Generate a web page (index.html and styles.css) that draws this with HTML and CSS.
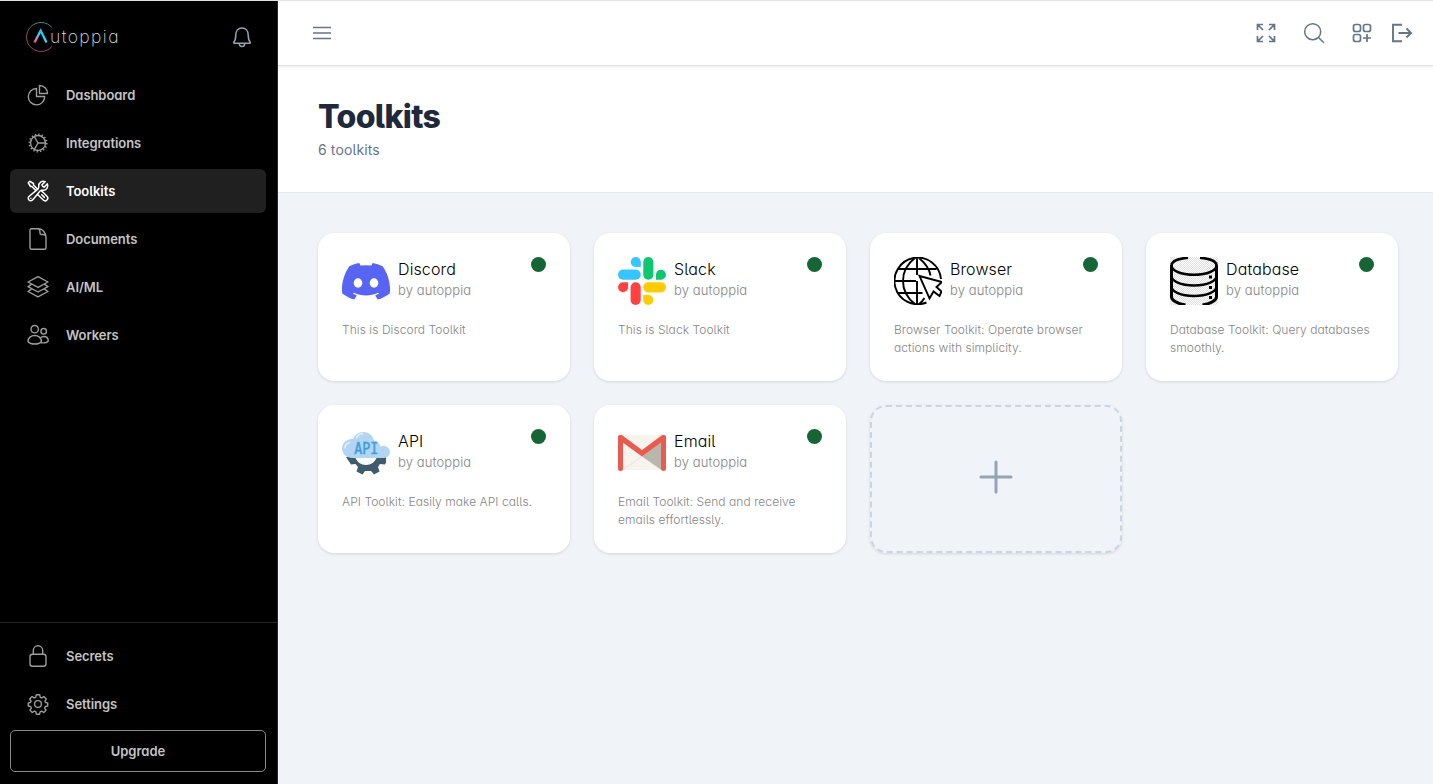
FILE: index.html
```html
<!DOCTYPE html>
<html lang="en">
<head>
<meta charset="utf-8">
<title>Toolkits - Autoppia</title>
<link rel="stylesheet" href="styles.css">
</head>
<body>
<div class="app">
  <aside class="sidebar">
    <div class="brand">
      <div class="logo">
        <svg class="logo-mark" width="30" height="32" viewBox="0 0 30 32" fill="none">
          <defs>
            <linearGradient id="ring" x1="0" y1="0" x2="0" y2="1"><stop offset="0" stop-color="#3b8e93"/><stop offset=".35" stop-color="#8a5040"/><stop offset=".7" stop-color="#a5602f"/><stop offset="1" stop-color="#9b3a7c"/></linearGradient>
            <linearGradient id="peak" x1="8" y1="21" x2="20" y2="8" gradientUnits="userSpaceOnUse"><stop offset="0" stop-color="#ff5470"/><stop offset=".28" stop-color="#c98be0"/><stop offset=".55" stop-color="#20dff0"/><stop offset="1" stop-color="#1b8fe0"/></linearGradient>
          </defs>
          <path d="M26 6.500A14.500 14.500 0 1 0 26 25.500" stroke="url(#ring)"/>
          <path d="M8.500 21.500 14.700 9.500l5.800 12" stroke="url(#peak)" stroke-width="2.300"/>
        </svg>
        <span class="logo-text">utoppia</span>
      </div>
      <svg class="bell" width="24" height="24" viewBox="0 0 24 24"><path d="M3.800 17.200c1.500-1.700 2-3 2-7.200 0-4 2.300-7 6.200-7s6.200 3 6.200 7c0 4.200.5 5.500 2 7.200.4.500.1 1-.5 1H4.300c-.6 0-.9-.5-.5-1zM9.300 18.500a2.700 3 0 0 0 5.400 0"/></svg>
    </div>
    <nav class="nav">
      <a class="nav-item"><svg width="24" height="24" viewBox="0 0 24 24"><path d="M10.500 5.500a8.200 8.200 0 1 0 8.200 8h-8.200zM13.500 2.500v8h8a8 8 0 0 0-8-8z"/></svg><span>Dashboard</span></a>
      <a class="nav-item"><svg width="24" height="24" viewBox="0 0 24 24"><circle cx="12" cy="12" r="7.500"/><circle cx="12" cy="12" r="8.700" stroke-width="1.700" stroke-linecap="butt" stroke-dasharray="1.300 2.117"/><path d="M12 12h7.500M12 12 8.250 5.500M12 12l-3.750 6.500"/></svg><span>Integrations</span></a>
      <a class="nav-item active"><svg width="24" height="24" viewBox="0 0 24 24"><path d="M11.420 15.170 17.250 21A2.652 2.652 0 0 0 21 17.250l-5.877-5.877M11.420 15.170l2.496-3.030c.317-.384.740-.626 1.208-.766M11.420 15.170l-4.655 5.653a2.548 2.548 0 1 1-3.586-3.586l6.837-5.630m5.108-.233c.550-.164 1.163-.188 1.743-.140a4.500 4.500 0 0 0 4.486-6.336l-3.276 3.277a3.004 3.004 0 0 1-2.250-2.250l3.276-3.276a4.500 4.500 0 0 0-6.336 4.486c.091 1.076-.071 2.264-.904 2.950l-.102.085m-1.745 1.437L5.909 7.500H4.500L2.250 3.750l1.500-1.500L7.500 4.500v1.409l4.260 4.260m-1.745 1.437 1.745-1.437m6.615 8.206L15.750 15.750M4.867 19.125h.008v.008h-.008z"/></svg><span>Toolkits</span></a>
      <a class="nav-item"><svg width="24" height="24" viewBox="0 0 24 24"><path d="M13 1.800H5.500A1.500 1.500 0 0 0 4 3.300v17.400a1.500 1.500 0 0 0 1.500 1.500h13a1.500 1.500 0 0 0 1.500-1.500V10.500C20 5.500 16 1.800 13 1.800zM12.300 1.800c1.400.5 1.700 1.700 1.700 3v1.400c0 .8.500 1.300 1.300 1.300h1.400c1.400 0 2.700.5 3.200 1.800"/></svg><span>Documents</span></a>
      <a class="nav-item"><svg width="24" height="24" viewBox="0 0 24 24"><path d="M12 1.700 22 7l-10 5.300L2 7zM5.800 9.200 2 11.700l10 5.300 10-5.300-3.800-2.500M5.800 13.900 2 16.500l10 5.300 10-5.300-3.800-2.600"/></svg><span>AI/ML</span></a>
      <a class="nav-item"><svg width="24" height="24" viewBox="0 0 24 24"><circle cx="8.700" cy="6.200" r="3.700"/><circle cx="17.700" cy="8.300" r="2.800"/><path d="M2 18.500c0-3.600 3-6 6.700-6s6.700 2.400 6.700 6c-1.300 2-4 2.500-6.700 2.500S3.300 20.500 2 18.500zM14.300 15.200c1-1.100 2.200-1.700 3.500-1.700 2.600 0 4.500 1.700 4.500 4.500-1.300 1.700-4 2.200-6.900 1.700"/></svg><span>Workers</span></a>
    </nav>
    <div class="sidebar-footer">
      <a class="nav-item"><svg width="24" height="24" viewBox="0 0 24 24"><rect x="4" y="10.300" width="16" height="12" rx="2.500"/><path d="M7.300 10.300V6.500a4.700 4.700 0 0 1 9.400 0v3.800"/></svg><span>Secrets</span></a>
      <a class="nav-item"><svg width="24" height="24" viewBox="0 0 24 24"><circle cx="12" cy="12" r="3.400"/><path d="M10.300 2.800h3.400l.6 2.500 1.400.6 2.200-1.300 2.400 2.400L19 9.200l.5 1.300 2.200.4v3.100l-2.300.5-.7 1.600 1.300 2.100-2.300 2.300-2.100-1.300-1.500.7-.5 2.300h-3.200l-.5-2.300-1.500-.7-2.100 1.300L4 18.200l1.300-2.100-.7-1.600-2.300-.5v-3.100l2.200-.4.600-1.300L3.700 7l2.400-2.400 2.200 1.300 1.400-.6z"/></svg><span>Settings</span></a>
      <button class="upgrade">Upgrade</button>
    </div>
  </aside>
  <main class="main">
    <header class="topbar">
      <svg class="menu" width="24" height="24" viewBox="0 0 24 24"><path d="M3 6.500h18M3 12h18M3 17.500h18"/></svg>
      <div class="actions">
        <svg width="24" height="24" viewBox="0 0 24 24"><path stroke-width="1.700" d="M9 3.500H3.500V9M3.500 3.500l5.500 5.500M15 3.500h5.500V9M20.500 3.500 15 9M9 20.500H3.500V15M3.500 20.500 9 15M15 20.500h5.500V15M20.500 20.500 15 15"/></svg>
        <svg width="24" height="24" viewBox="0 0 24 24"><circle cx="10.700" cy="10.700" r="8"/><path d="m16.500 16.500 5.300 5.300"/></svg>
        <svg width="24" height="24" viewBox="0 0 24 24"><g stroke-width="1.700"><rect x="3.500" y="3.500" width="7" height="7" rx="2"/><rect x="13.500" y="3.500" width="7" height="7" rx="2"/><rect x="3.500" y="13.500" width="7" height="7" rx="2"/><path d="M17 13v8M13 17h8"/></g></svg>
        <svg class="exit" width="24" height="24" viewBox="0 0 24 24"><path d="M12 3.800H3v16.400h9M8.500 12H21M16.500 7.500 21 12l-4.500 4.500"/></svg>
      </div>
    </header>
    <section class="page-head">
      <h1>Toolkits</h1>
      <p>6 toolkits</p>
    </section>
    <section class="grid">
      <article class="card">
        <div class="card-top">
          <svg width="48" height="48" viewBox="0 0 48 48"><path fill="#5865f2" d="M40.600 9.200A39 39 0 0 0 30.700 6l-1.300 2.600a37 37 0 0 0-10.900 0L17.200 6c-3.500.6-6.800 1.700-9.900 3.200C1.100 18.400-.6 27.500.2 36.400c4.200 3.100 8.200 5 12.100 6.200l2.500-4.200-3.900-1.900 1-.8c7.700 3.600 16.400 3.600 24.200 0l1 .8-3.900 1.900 2.500 4.200c3.900-1.200 7.900-3.100 12.100-6.200 1-10.300-1.700-19.300-7.200-27.200z"/><ellipse cx="16" cy="26" rx="4.300" ry="4.700" fill="#fff"/><ellipse cx="32" cy="26" rx="4.300" ry="4.700" fill="#fff"/></svg>
          <div class="card-title"><h2>Discord</h2><p>by autoppia</p></div><i class="status"></i>
        </div>
        <p class="desc">This is Discord Toolkit</p>
      </article>
      <article class="card">
        <div class="card-top">
          <svg width="48" height="48" viewBox="0 0 48 48"><g fill="#36c5ff"><rect y="12.600" width="22.800" height="10.100" rx="5.050"/><path d="M22.800 10.100V5.050a5.050 5.050 0 1 0-5.050 5.050z"/></g><g fill="#0ec66f"><rect x="25.300" width="10.100" height="22.800" rx="5.050"/><path d="M37.900 22.800h5.050a5.050 5.050 0 1 0-5.050-5.050z"/></g><g fill="#ffcc02"><rect x="25.200" y="25.300" width="22.800" height="10.100" rx="5.050"/><path d="M25.200 37.900v5.050a5.050 5.050 0 1 0 5.050-5.050z"/></g><g fill="#ff4141"><rect x="12.600" y="25.200" width="10.100" height="22.800" rx="5.050"/><path d="M10.100 25.200H5.050a5.050 5.050 0 1 0 5.050 5.050z"/></g></svg>
          <div class="card-title"><h2>Slack</h2><p>by autoppia</p></div><i class="status"></i>
        </div>
        <p class="desc">This is Slack Toolkit</p>
      </article>
      <article class="card">
        <div class="card-top">
          <svg width="48" height="48" viewBox="0 0 48 48" fill="none" stroke="#000" stroke-width="1.900"><path d="M47 22A23.300 23.300 0 1 0 32.500 45.500M23 1v17M23 24v23M4.500 12h38M1 24h21M4.500 36h24M21 1C5 13 5 35 21 47M25 1c6 5 10.500 11 11.500 17.500M25 47c2-1.500 4-3.500 5.500-6"/><path d="M25.500 19 48 25l-5.500 5 5 4.500-2 4.500-6-4.500-4 7z" fill="#fff"/></svg>
          <div class="card-title"><h2>Browser</h2><p>by autoppia</p></div><i class="status"></i>
        </div>
        <p class="desc">Browser Toolkit: Operate browser actions with simplicity.</p>
      </article>
      <article class="card">
        <div class="card-top">
          <svg width="48" height="48" viewBox="0 0 48 48" fill="none" stroke="#000"><defs><pattern id="dither" width="2" height="2" patternUnits="userSpaceOnUse"><path d="M0 0h1v1H0zM1 1h1v1H1z" fill="#dedede" stroke="none"/></pattern></defs><path fill="url(#dither)" stroke="none" d="M0 0h48v48H0z"/><path stroke-width="3" d="M1.500 8v32c0 3 5 6.500 14 8M46.500 8v32c0 3-5 6.500-14 8"/><path stroke-width="2.500" d="M18 .7C8 1.500 1.500 4.500 1.500 8.500c0 5 9 9.200 22.500 9.200s22.500-4.200 22.500-9.200c0-4-6.500-7-16.500-7.800M1.500 19c0 5 9 9.500 22.500 9.500S46.500 24 46.500 19M1.500 29.500c0 5 9 9.500 22.500 9.500s22.500-4.500 22.500-9.500"/><path fill="#000" stroke="none" d="M39 18.500h3v3h-3zM39 29h3v3h-3zM39 39h3v3h-3z"/></svg>
          <div class="card-title"><h2>Database</h2><p>by autoppia</p></div><i class="status"></i>
        </div>
        <p class="desc">Database Toolkit: Query databases smoothly.</p>
      </article>
      <article class="card">
        <div class="card-top">
          <svg width="48" height="48" viewBox="0 0 48 48"><path fill="#3f5c6e" d="M4 28h9c2 5 6 8 11 8s9-3 11-8h9v5.500l-1 2-5-.5-2 3 1.500 4.500-5.500 3-3-3.500h-6l-2.500 3.500-6-3 1.500-4.500-2.500-3-4.500.5z"/><path fill="#b2d5f1" d="M9.500 29a9.500 9.500 0 0 1 0-19H11a11 11 0 0 1 21 1.500 9 9 0 0 1 6.500 6A6.500 6.500 0 0 1 48 23a6 6 0 0 1-6 6z"/><path fill="none" stroke="#e3f2fd" stroke-width="1.500" stroke-linecap="round" d="M14.500 9c1.200-2.500 3.500-4 6-4.200M3 19c0-2.500 1.500-4.500 4-5.300"/><text class="api-text" x="12.300" y="25" textLength="24" lengthAdjust="spacingAndGlyphs">API</text></svg>
          <div class="card-title"><h2>API</h2><p>by autoppia</p></div><i class="status"></i>
        </div>
        <p class="desc">API Toolkit: Easily make API calls.</p>
      </article>
      <article class="card">
        <div class="card-top">
          <svg width="48" height="48" viewBox="0 0 48 48"><path fill="#f7f4ed" d="M3 6h42v35H3z"/><path fill="#b8b7ad" d="M24 27.500 43.500 13v28z"/><path fill="none" stroke="#dfddd5" stroke-width=".8" d="M4.500 41 24 27.500"/><path fill="none" stroke="#e95b4e" stroke-width="5" stroke-linecap="round" stroke-linejoin="round" d="M2.500 8.500v31M45.500 8.500v31"/><path fill="#e95b4e" d="M.5 7C1.500 5.700 3 5.700 4.500 6.500L24 21 43.500 6.500c1.500-.8 3-.8 4 .5s.5 3-.8 4L24 27.500 1.300 11C0 10-.5 8.300.5 7z"/></svg>
          <div class="card-title"><h2>Email</h2><p>by autoppia</p></div><i class="status"></i>
        </div>
        <p class="desc">Email Toolkit: Send and receive emails effortlessly.</p>
      </article>
      <div class="card add-card"><svg width="40" height="40" viewBox="0 0 40 40"><path d="M20 5v30M5 20h30"/></svg></div>
    </section>
  </main>
</div>
</body>
</html>
```
FILE: styles.css
```css
* { box-sizing: border-box; margin: 0; padding: 0; }
body {
  background: #f0f3f8;
  font-family: Inter, "Liberation Sans", sans-serif;
  font-feature-settings: "cv11", "cv05";
}
svg { display: block; flex: none; }
.app { display: flex; height: 784px; border-top: 1px solid #e0e0e0; overflow: hidden; }

.sidebar {
  display: flex; flex-direction: column; flex: none;
  width: 278px; background: #000; border-right: 1px solid #26282c;
}
.brand { display: flex; justify-content: space-between; height: 72px; padding: 20px 23px 0 26px; }
.logo { display: flex; }
.logo-text {
  margin-left: -6px; padding-top: 4px;
  font-size: 17.5px; font-weight: 200; line-height: 24px; letter-spacing: 1.4px; color: #d8d8d8;
}
.bell { margin-top: 4px; fill: none; stroke: #94a3b8; stroke-width: 1.5; stroke-linejoin: round; }
.nav, .sidebar-footer { display: flex; flex-direction: column; gap: 4px; padding: 0 11px 0 10px; }
.nav { flex: 1; }
.nav-item {
  display: flex; align-items: center; gap: 16px;
  height: 44px; padding: 0 16px; border-radius: 6px;
  font-size: 13px; font-weight: 600; line-height: 20px; letter-spacing: -.06px; color: #c4c4c4;
}
.nav-item svg { fill: none; stroke: #9c9c9c; stroke-width: 1.4; stroke-linejoin: round; stroke-linecap: round; }
.active { background: #202020; color: #fff; }
.active svg { stroke: #fff; stroke-width: 1.5; }
.sidebar-footer { border-top: 1px solid #242424; padding-top: 11px; padding-bottom: 12px; }
.upgrade {
  height: 42px; background: #000; border: 1px solid #8a8a8a; border-radius: 5px;
  font: inherit; font-feature-settings: inherit; font-size: 13px; font-weight: 600; color: #c4c4c4;
}

.main { flex: 1; min-width: 0; }
.topbar {
  position: relative;
  display: flex; align-items: center; justify-content: space-between;
  height: 65px; padding: 0 19px 0 32px;
  background: #fff; border-bottom: 1px solid #e0e1e3; box-shadow: 0 1px 2px rgba(0, 0, 0, .08);
}
.topbar svg { fill: none; stroke: #64748b; stroke-width: 1.5; }
.actions { display: flex; gap: 24px; }
.topbar .exit { margin-left: -8px; stroke-width: 1.9; }

.page-head { height: 127px; padding: 31px 40px 0; background: #fff; border-bottom: 1px solid #e2e8f0; }
.page-head h1 { font-size: 32px; line-height: 40px; font-weight: 800; letter-spacing: -.65px; color: #1e293b; }
.page-head p { margin-top: 2px; font-size: 14px; line-height: 22px; letter-spacing: .12px; color: #64748b; }

.grid { display: grid; grid-template-columns: repeat(4, 252px); gap: 24px; padding: 40px; }
.card { height: 148px; padding: 24px; background: #fff; border-radius: 16px; box-shadow: 0 1px 3px rgba(0, 0, 0, .12); }
.card-top { display: flex; }
.card-title { flex: 1; margin-left: 8px; }
.card-title h2 { font-size: 16px; line-height: 24px; font-weight: 300; letter-spacing: .12px; color: #000; }
.card-title p { font-size: 13px; line-height: 18px; font-weight: 350; letter-spacing: .12px; color: #858585; }
.status { width: 15px; height: 15px; border-radius: 50%; background: #166534; }
.desc { margin: 16px -4px 0 0; font-size: 12px; line-height: 18px; font-weight: 350; letter-spacing: .06px; color: #858585; }
.api-text { font: 15px "DejaVu Sans Mono", monospace; fill: #3d9bdc; stroke: #3d9bdc; stroke-width: .4; }
.add-card { display: flex; align-items: center; justify-content: center; padding: 0 0 4px; background: transparent; border: 2px dashed #cbd5e1; }
.add-card svg { fill: none; stroke: #94a3b8; stroke-width: 3; stroke-linecap: round; }
```
